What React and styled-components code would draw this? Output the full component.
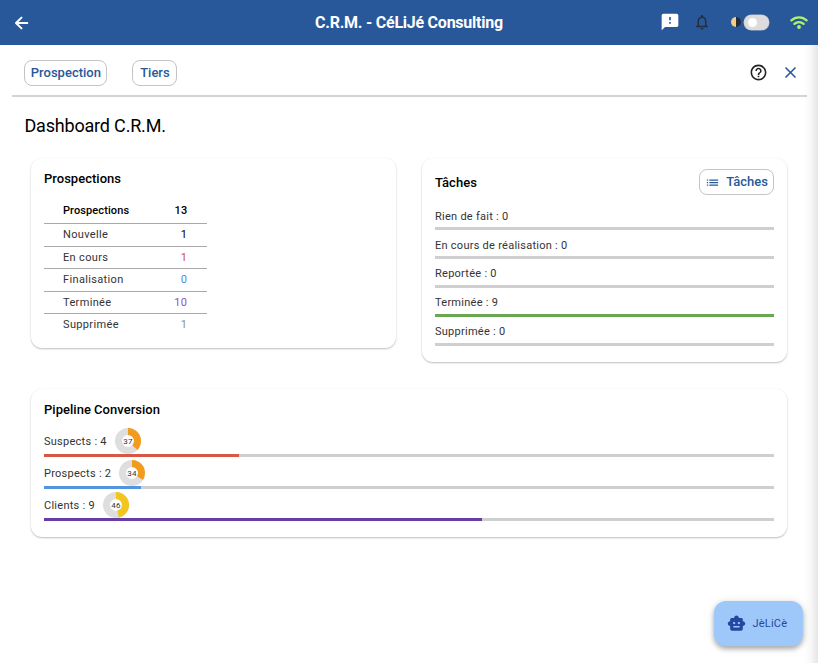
import styled, { createGlobalStyle } from "styled-components";
import {
  MdFeedback,
  MdOutlineNotifications,
  MdHelpOutline,
  MdClose,
  MdList,
  MdSmartToy,
} from "react-icons/md";

const GlobalStyle = createGlobalStyle`
  * {
    box-sizing: border-box;
  }
  body {
    margin: 0;
    background: #fff;
    color: #000;
    font-family: Roboto, "Liberation Sans", sans-serif;
  }
`;

const Page = styled.div`
  position: relative;
  height: 663px;
  overflow: hidden;
  display: flex;
  flex-direction: column;
`;

const Header = styled.header`
  height: 44.6px;
  flex: none;
  display: grid;
  grid-template-columns: 315px 1fr 158px;
  align-items: center;
  background: #285899;
  color: #fff;
  h1 {
    margin: 0;
    padding-top: 1px;
    font-size: 16px;
    font-weight: 700;
    letter-spacing: -0.24px;
    line-height: 20px;
    white-space: nowrap;
  }
`;

const BackButton = styled.div`
  display: flex;
  padding: 1px 0 0 14px;
`;

const HeaderActions = styled.div`
  display: flex;
  align-items: center;
  svg {
    flex: none;
  }
  .bell {
    margin-left: 13px;
    color: #222f3f;
  }
  .half {
    margin-left: 20px;
  }
  .wifi {
    margin-left: 20px;
  }
`;

const Toggle = styled.div`
  width: 25px;
  height: 15px;
  margin-left: 3px;
  padding: 3px 4px;
  border-radius: 8px;
  background: #dcdcdc;
  box-shadow: 0 0 0 0.5px #b4bcc6;
  &::before {
    content: "";
    display: block;
    width: 9px;
    height: 9px;
    border-radius: 50%;
    background: #fff;
  }
`;

const Toolbar = styled.nav`
  display: flex;
  align-items: center;
  height: 52px;
  flex: none;
  margin: 0 11.5px 0 12px;
  padding: 7.8px 7px 0 12.4px;
  border-bottom: 2px solid #d3d3d3;
  .help {
    margin-left: auto;
    margin-bottom: 1px;
    color: #222;
  }
  .close {
    margin-left: 13px;
    margin-bottom: 1px;
    color: #285899;
  }
`;

const Chip = styled.div`
  display: flex;
  align-items: center;
  justify-content: center;
  width: ${(props) => props.$width}px;
  height: 26px;
  margin-right: ${(props) => props.$gap || 0}px;
  border: 1px solid #c4c4c4;
  border-radius: 8px;
  background: #fff;
  color: #285899;
  font-size: 13px;
  font-weight: 500;
  line-height: 18px;
  svg {
    margin-right: 6px;
  }
`;

const Title = styled.h2`
  margin: 18px 0 0 24.4px;
  font-size: 18px;
  font-weight: 400;
  line-height: 22px;
  letter-spacing: -0.18px;
`;

const Cards = styled.main`
  display: grid;
  grid-template-columns: 365px 365px;
  gap: 27px 26px;
  align-items: start;
  padding: 21px 0 0 31px;
`;

const Card = styled.section`
  grid-column: ${(props) => (props.$wide ? "1 / -1" : "auto")};
  height: ${(props) => props.$height}px;
  padding: 0 13px;
  border-radius: 11px;
  background: #fff;
  box-shadow: 0 1px 2px rgba(0, 0, 0, 0.26), 0 0 1px rgba(0, 0, 0, 0.04);
`;

const CardHead = styled.div`
  display: flex;
  align-items: center;
  justify-content: space-between;
  height: ${(props) => props.$height}px;
  margin-bottom: ${(props) => props.$pull || 0}px;
  h3 {
    margin: 0;
    font-size: 13px;
    font-weight: 500;
    letter-spacing: 0.02px;
  }
`;

const Table = styled.div`
  width: 163px;
`;

const TableRow = styled.div`
  display: flex;
  justify-content: space-between;
  height: 22.5px;
  padding: 0 19px;
  border-top: ${(props) => (props.$head ? "0" : "1px solid #a9a9a9")};
  color: #333;
  font-size: 11px;
  line-height: 22px;
  letter-spacing: 0.35px;
  ${(props) =>
    props.$head &&
    `
    height: 24.5px;
    color: #000;
    font-weight: 500;
    letter-spacing: 0.1px;
    line-height: 23px;
  `}
`;

const Value = styled.span`
  margin-right: 0.7px;
  color: ${(props) => props.$color};
`;

const Meter = styled.div`
  height: ${(props) => props.$height}px;
  display: flex;
  flex-direction: column;
  justify-content: flex-end;
`;

const MeterLabel = styled.div`
  display: flex;
  align-items: center;
  height: ${(props) => props.$height}px;
  color: #333;
  font-size: 11px;
  letter-spacing: 0.26px;
  white-space: nowrap;
  span {
    padding-top: ${(props) => (props.$height > 22 ? 2 : 0)}px;
  }
  svg {
    margin-left: 8px;
  }
`;

const Track = styled.div`
  height: 3px;
  background: #cfcfcf;
  div {
    height: 3px;
    background: ${(props) => props.$color};
  }
`;

const EdgeShade = styled.div`
  position: absolute;
  top: 45px;
  right: 0;
  bottom: 0;
  width: 14px;
  background: linear-gradient(to right, rgba(0, 0, 0, 0), rgba(0, 0, 0, 0.03) 50%, rgba(0, 0, 0, 0.1));
`;

const Assistant = styled.div`
  position: absolute;
  left: 714px;
  top: 601px;
  display: flex;
  align-items: center;
  width: 89px;
  height: 45px;
  padding-left: 13px;
  border-radius: 12px;
  background: #9fc8fa;
  color: #2448a0;
  font-size: 11px;
  letter-spacing: 0.2px;
  box-shadow: 0 3px 5px rgba(0, 0, 0, 0.28), 0 1px 8px rgba(0, 0, 0, 0.12);
  svg {
    margin-right: 6.5px;
  }
`;

const prospections = [
  { label: "Nouvelle", value: 1, color: "#000" },
  { label: "En cours", value: 1, color: "#d5503f" },
  { label: "Finalisation", value: 0, color: "#4b8fe2" },
  { label: "Terminée", value: 10, color: "#9450b8" },
  { label: "Supprimée", value: 1, color: "#8f8f8f" },
];

const tasks = [
  { label: "Rien de fait", value: 0 },
  { label: "En cours de réalisation", value: 0 },
  { label: "Reportée", value: 0 },
  { label: "Terminée", value: 9, percent: 100 },
  { label: "Supprimée", value: 0 },
];

const pipeline = [
  { label: "Suspects", value: 4, percent: 26.67, color: "#d65745", score: 37, scoreColor: "#f29c1f" },
  { label: "Prospects", value: 2, percent: 13.33, color: "#5294e2", score: 34, scoreColor: "#f29c1f" },
  { label: "Clients", value: 9, percent: 60, color: "#643ea4", score: 46, scoreColor: "#f3c51d" },
];

function Donut({ value, color }) {
  const length = 2 * Math.PI * 9.5;
  return (
    <svg width="26" height="26" viewBox="0 0 26 26">
      <circle cx="13" cy="13" r="9.5" fill="none" stroke="#dedede" strokeWidth="7" />
      <circle
        cx="13"
        cy="13"
        r="9.5"
        fill="none"
        stroke={color}
        strokeWidth="7"
        strokeDasharray={`${(length * value) / 100} ${length}`}
        transform="rotate(-90 13 13)"
      />
      <text x="13" y="16" textAnchor="middle" fontSize="8" fill="#333" letterSpacing="0.2">
        {value}
      </text>
    </svg>
  );
}

function MeterRow({ item, height, labelHeight, color }) {
  return (
    <Meter $height={height}>
      <MeterLabel $height={labelHeight}>
        <span>
          {item.label} : {item.value}
        </span>
        {item.score && <Donut value={item.score} color={item.scoreColor} />}
      </MeterLabel>
      <Track $color={color}>
        <div style={{ width: `${item.percent || 0}%` }} />
      </Track>
    </Meter>
  );
}

export default function App() {
  return (
    <Page>
      <GlobalStyle />
      <Header>
        <BackButton>
          <svg width="16" height="16" viewBox="0 0 16 16" fill="none" stroke="#fff" strokeWidth="2" strokeLinecap="round" strokeLinejoin="round">
            <path d="M13.3 8H2.2M7.5 2.6L2 8l5.5 5.4" />
          </svg>
        </BackButton>
        <h1>C.R.M. - CéLiJé Consulting</h1>
        <HeaderActions>
          <MdFeedback size={20} />
          <MdOutlineNotifications className="bell" size={18} />
          <svg className="half" width="10" height="10" viewBox="0 0 10 10">
            <path d="M5 0a5 5 0 0 0 0 10z" fill="#f0cd87" />
            <path d="M5 0a5 5 0 0 1 0 10z" fill="#252d38" />
          </svg>
          <Toggle />
          <svg className="wifi" width="20" height="16" viewBox="0 0 20 16" fill="none" stroke="#aef26b" strokeWidth="2.3" strokeLinecap="round">
            <path d="M2.4 6.4a11 11 0 0 1 15.2 0M5.4 9.9a6.7 6.7 0 0 1 9.2 0" />
            <circle cx="10" cy="13" r="1.9" fill="#aef26b" stroke="none" />
          </svg>
        </HeaderActions>
      </Header>
      <Toolbar>
        <Chip $width={83} $gap={25}>Prospection</Chip>
        <Chip $width={45}>Tiers</Chip>
        <MdHelpOutline className="help" size={19} />
        <MdClose className="close" size={19} />
      </Toolbar>
      <Title>Dashboard C.R.M.</Title>
      <Cards>
        <Card $height={190}>
          <CardHead $height={41}>
            <h3>Prospections</h3>
          </CardHead>
          <Table>
            <TableRow $head>
              <span>Prospections</span>
              <Value>13</Value>
            </TableRow>
            {prospections.map((row) => (
              <TableRow key={row.label}>
                <span>{row.label}</span>
                <Value $color={row.color}>{row.value}</Value>
              </TableRow>
            ))}
          </Table>
        </Card>
        <Card $height={204}>
          <CardHead $height={49} $pull={-5}>
            <h3>Tâches</h3>
            <Chip $width={75}>
              <MdList size={15} />
              Tâches
            </Chip>
          </CardHead>
          {tasks.map((item) => (
            <MeterRow key={item.label} item={item} height={28.8} labelHeight={22} color="#6aa755" />
          ))}
        </Card>
        <Card $wide $height={148}>
          <CardHead $height={41} $pull={-5}>
            <h3>Pipeline Conversion</h3>
          </CardHead>
          {pipeline.map((item) => (
            <MeterRow key={item.label} item={item} height={32} labelHeight={26} color={item.color} />
          ))}
        </Card>
      </Cards>
      <EdgeShade />
      <Assistant>
        <MdSmartToy size={19} />
        JèLiCè
      </Assistant>
    </Page>
  );
}
